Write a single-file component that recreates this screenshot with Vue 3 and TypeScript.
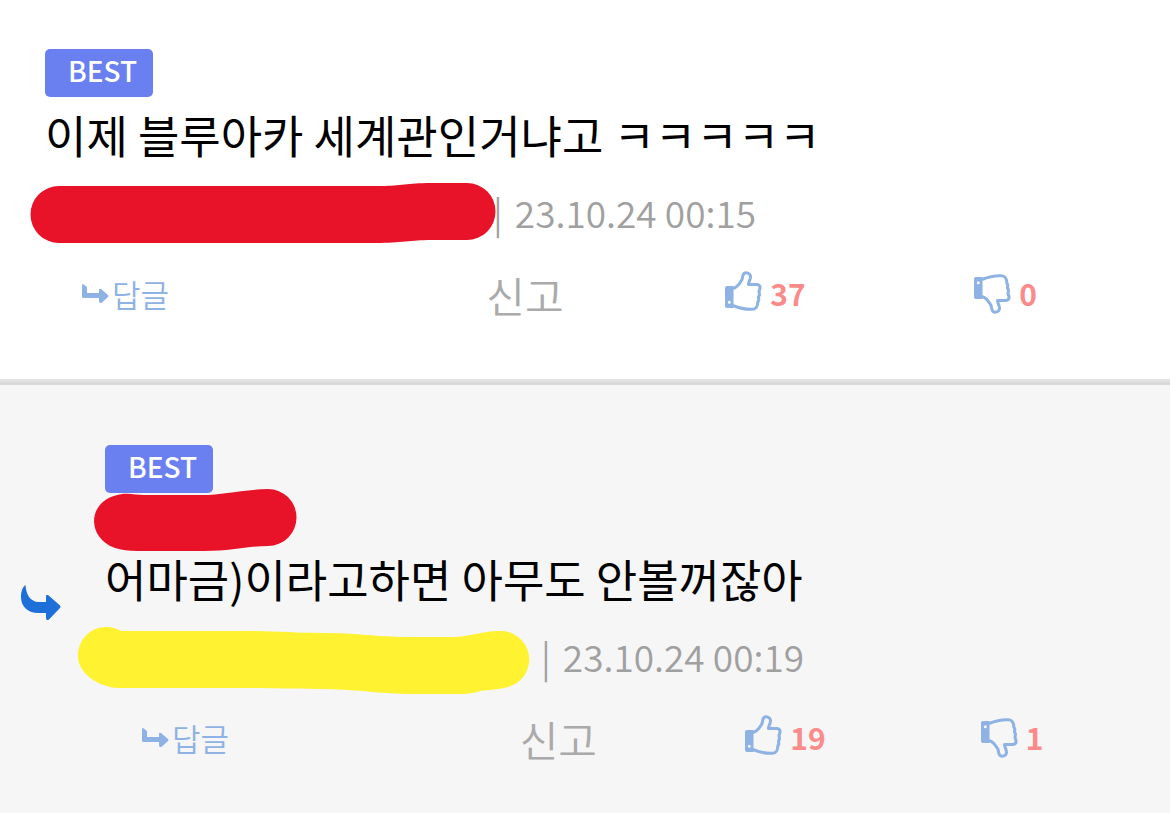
<script setup lang="ts">
interface Comment {
  id: number
  nested: boolean
  body: string
  date: string
  likes: number
  dislikes: number
}

const comments: Comment[] = [
  { id: 1, nested: false, body: '이제 블루아카 세계관인거냐고 ㅋㅋㅋㅋㅋ', date: '23.10.24 00:15', likes: 37, dislikes: 0 },
  { id: 2, nested: true, body: '어마금)이라고하면 아무도 안볼꺼잖아', date: '23.10.24 00:19', likes: 19, dislikes: 1 },
]
</script>

<template>
  <main class="comments">
    <article v-for="c in comments" :key="c.id" class="comment" :class="{ nested: c.nested }">
      <svg v-if="c.nested" class="nest-arrow" viewBox="0 0 40 36" aria-hidden="true">
        <path d="M4.500 0C5 9 9 17 18 17H25V11Q25 9.500 27 10L39 20.500Q40 22 39 23L28 34.500Q25 36 25 33V28H18C5 28 0 20 0 12C0 6 2 1.500 4.500 0Z" />
      </svg>
      <span class="badge">BEST</span>
      <div v-if="c.nested" class="mention">
        <svg class="mask mask-mention" viewBox="0 0 204 64" aria-hidden="true">
          <path d="M28 5C36 4 43 6 50 6H108C129 6 145 1 174 0A28.500 28.500 0 0 1 174 57C153 57 138 62 110 62H43C35 62 27 61 21 59C-8 49-8 10 28 5Z" />
        </svg>
      </div>
      <p class="body">{{ c.body }}</p>
      <div class="meta">
        <span class="author">
          <svg v-if="!c.nested" class="mask mask-author" viewBox="0 0 466 62" aria-hidden="true">
            <path d="M28 3H350C371 3 375 0 400 0H436A28.500 28.500 0 0 1 436 57H400C380 57 370 60 345 60H28A28.500 28.500 0 0 1 28 3Z" />
          </svg>
          <svg v-else class="mask mask-reply" viewBox="0 0 452 68" aria-hidden="true">
            <path d="M28 0C35 0 39 2 43 4H166C200 4 215 6 245 6C280 6 290 9 325 10H376C392 10 403 4 421 4A28.500 28.500 0 0 1 430 60C415 64 408 62 399 65C391 67 385 67 376 67H336C300 67 280 62 240 62C205 62 190 61 160 61H40C27 61 0 50 0 29C0 13 12 0 28 0Z" />
          </svg>
        </span>
        <span>|</span>
        <time>{{ c.date }}</time>
      </div>
      <div class="actions">
        <button type="button" class="reply">
          <svg class="reply-icon" viewBox="0 0 27 20" aria-hidden="true">
            <path d="M1 0L5 3V9H17V6Q17 4 19 5L26 11Q27 12 26 13L20 18.500Q17 20 17 17V14H1.500Q0 14 0 12.500V1Q0 0 1 0Z" />
          </svg>
          <span>답글</span>
        </button>
        <button type="button" class="report">신고</button>
        <button type="button" class="vote" aria-label="추천">
          <svg class="thumb" viewBox="0 0 38 40" aria-hidden="true">
            <path class="cuff" fill-rule="evenodd" d="M3 15H9.500V37H3Q1 37 1 35V17Q1 15 3 15ZM5.300 29.800A1.500 1.500 0 1 0 5.300 32.800A1.500 1.500 0 1 0 5.300 29.800Z" />
            <path class="hand" d="M9 17.500C13 16.500 16 12 17.500 9.500C19 7.500 18 4 20 2.500C22 1 26 2 26.500 5C27 8 24.500 10.500 24.500 13.500H33Q36.500 14 36 17.500L35 20.500L35.500 24L34.500 26L34.800 29L33.800 31C33.800 35 32 38.300 28.500 38.300C20 38.700 15 37 9 34.500" />
          </svg>
          <span>{{ c.likes }}</span>
        </button>
        <button type="button" class="vote" aria-label="비추천">
          <svg class="thumb down" viewBox="0 0 38 40" aria-hidden="true">
            <path class="cuff" fill-rule="evenodd" d="M3 3H9.500V25H3Q1 25 1 23V5Q1 3 3 3ZM5.300 7.200A1.500 1.500 0 1 0 5.300 10.200A1.500 1.500 0 1 0 5.300 7.200Z" />
            <path class="hand" d="M9 22.500C13 23.500 16 28 17.500 30.500C19 32.500 18 36 20 37.500C22 39 26 38 26.500 35C27 32 24.500 29.500 24.500 26.500H33Q36.500 26 36 22.500L35 19.500L35.500 16L34.500 14L34.800 11L33.800 9C33.800 5 32 1.700 28.500 1.700C20 1.300 15 3 9 5.500" />
          </svg>
          <span>{{ c.dislikes }}</span>
        </button>
      </div>
    </article>
  </main>
</template>

<style>
body {
  margin: 0;
  background: #f6f6f6;
}
</style>

<style scoped>
.comments {
  font-family: "Noto Sans CJK KR", sans-serif;
}
.comment {
  position: relative;
  padding: 49px 45px 42px;
  background: #fff;
}
.comment.nested {
  padding: 60px 45px 29px 105px;
  background: #f6f6f6;
  border-top: 3px solid #d9d9d9;
}
.comment:first-child {
  border-bottom: 3px solid #e1e1e1;
}
.nest-arrow {
  position: absolute;
  left: 21px;
  top: 200px;
  width: 40px;
  height: 36px;
  fill: #1e70d8;
}
.badge {
  display: block;
  box-sizing: border-box;
  width: 108px;
  height: 48px;
  padding-left: 23px;
  border-radius: 5px;
  background: #6a7ff0;
  color: #fff;
  font-size: 28px;
  font-weight: 500;
  line-height: 42px;
}
.mention {
  position: relative;
  height: 48px;
}
.body {
  margin: 0;
  padding-bottom: 4px;
  color: #000;
  font-size: 45px;
  line-height: 76px;
}
.meta {
  display: flex;
  align-items: flex-start;
  gap: 12px;
  color: #a0a0a0;
  font-size: 37px;
  font-weight: 350;
  line-height: 70px;
}
.author {
  position: relative;
  width: 436px;
  height: 74px;
}
.nested .author {
  width: 424px;
}
.mask {
  position: absolute;
  overflow: visible;
  fill: #e81329;
}
.mask-author {
  left: -14px;
  top: 6px;
  width: 466px;
  height: 62px;
}
.mask-mention {
  left: -11px;
  top: -4px;
  width: 204px;
  height: 64px;
}
.mask-reply {
  left: -27px;
  top: 6px;
  width: 452px;
  height: 68px;
  fill: #fff230;
}
.actions {
  display: grid;
  grid-template-columns: 3fr 2fr 2fr 2fr;
  height: 86px;
  align-items: center;
}
button {
  display: flex;
  align-items: center;
  justify-content: center;
  padding: 0;
  border: 0;
  background: none;
  font-family: inherit;
  cursor: pointer;
}
.reply {
  justify-self: start;
  gap: 3px;
  padding-left: 37px;
  color: #8eb2e3;
  font-size: 31px;
  font-weight: 350;
}
.reply span,
.vote span {
  padding-bottom: 2px;
}
.reply-icon {
  width: 27px;
  height: 20px;
  fill: #8eb2e3;
}
.report {
  color: #aaa;
  font-size: 42px;
  font-weight: 350;
}
.vote {
  gap: 8px;
  color: #fb8b8b;
  font-size: 30px;
  font-weight: 700;
}
.thumb {
  width: 38px;
  height: 40px;
  margin-bottom: 6px;
}
.thumb.down {
  margin-bottom: 0;
}
.cuff {
  fill: #8eb2e3;
}
.hand {
  fill: none;
  stroke: #8eb2e3;
  stroke-width: 3;
  stroke-linejoin: round;
}
</style>
